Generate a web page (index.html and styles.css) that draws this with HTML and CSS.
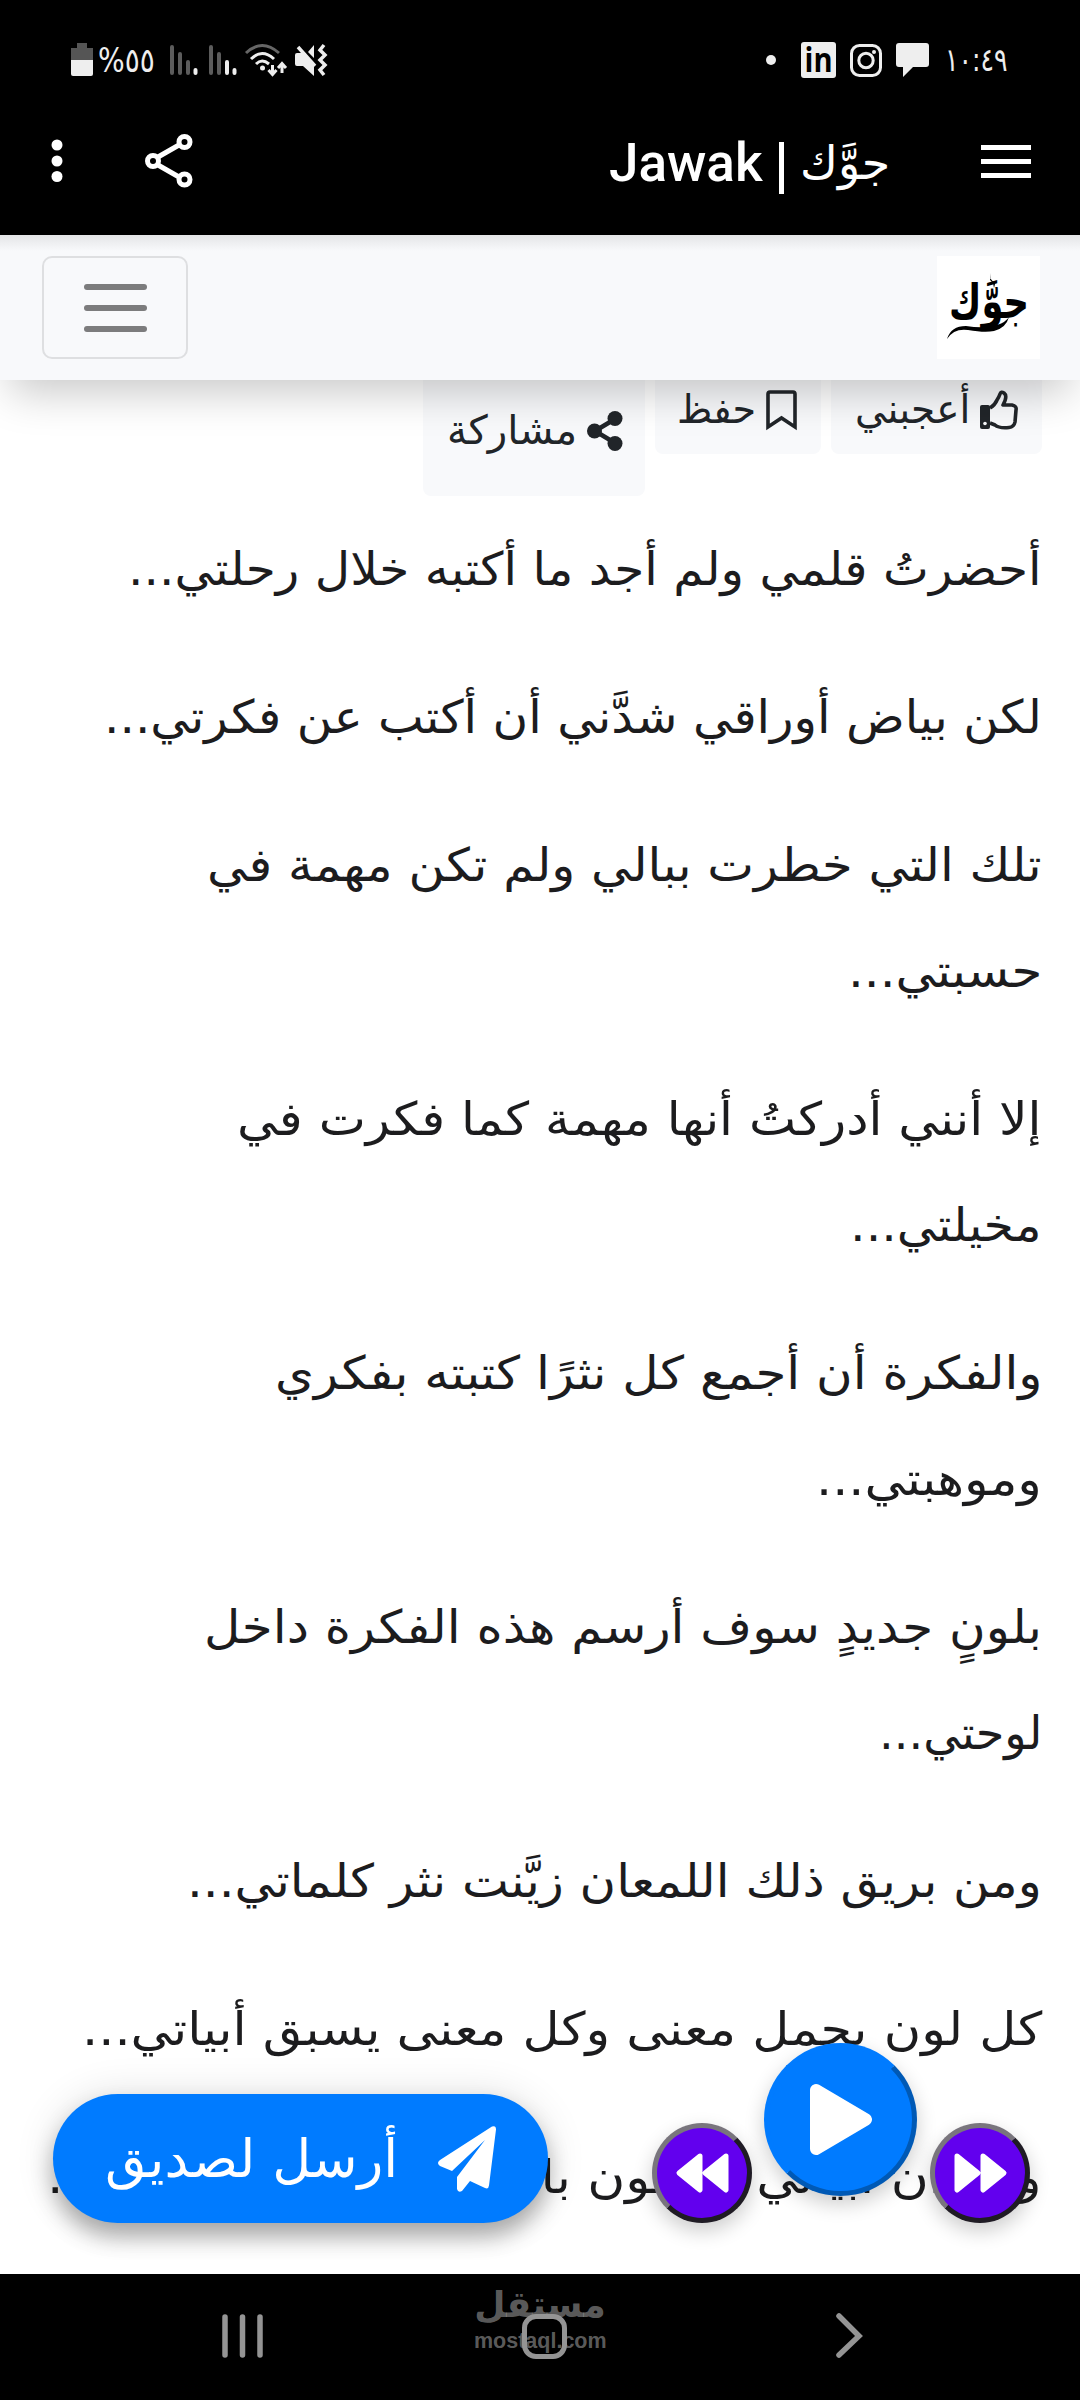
FILE: index.html
```html
<!DOCTYPE html>
<html lang="ar" dir="rtl">
  <head>
    <meta charset="UTF-8">
    <meta name="viewport" content="width=device-width, initial-scale=1.0">
    <title>Jawak | جوَّك</title>
    <link rel="stylesheet" href="styles.css">
  </head>
  <body>
    <header class="top">
      <div class="status">
        <div class="status-left">
          <svg class="battery" width="22" height="34" viewBox="0 0 22 34"><path fill="#555" d="M6 0h10v5h6v12H0V5h6z"/><path fill="#eee" d="M0 17h22v14q0 2-2 2H2q-2 0-2-2z"/></svg>
          <div class="percent"><span class="fit left" data-width="57">%٥٥</span></div>
          <svg class="signal" width="28" height="32" viewBox="0 0 28 32" stroke-width="4" stroke-linecap="round"><g stroke="#5c5c5c"><path d="M2 3v26M10 10v19M18 18v11"/></g><path stroke="#eee" d="M25.500 26v3"/></svg>
          <svg class="signal2" width="28" height="32" viewBox="0 0 28 32" stroke-width="4" stroke-linecap="round"><g stroke="#5c5c5c"><path d="M2 3v26M10 10v19"/></g><path stroke="#eee" d="M18 18v11M25.500 26v3"/></svg>
          <svg class="wifi" width="42" height="34" viewBox="0 0 42 34" fill="none" stroke="#eee" stroke-width="3"><path stroke="#666" d="M1 10Q17-5 34 10"/><path d="M6 16q11-11 23 0M11 21q6-6 13 0"/><circle cx="17.500" cy="25" r="2.500" fill="#eee" stroke="none"/><path d="M27.500 22v9M23.500 27l4 4.500 4-4.500M37 30v-10M33 25l4-4.500 4 4.500"/></svg>
          <svg class="mute" width="32" height="34" viewBox="0 0 32 34"><path fill="#eee" d="M0 12q0-2 2-2h5L19 22v11L8 23H2q-2 0-2-2zM19 2v13l-6-6z"/><path d="M3 4l17 19M29 2l-4 5 5 5-5 5 5 5-5 5 4 5" fill="none" stroke="#eee" stroke-width="3.500"/></svg>
        </div>
        <div class="status-right">
          <i class="dot"></i>
          <svg class="linkedin" width="35" height="36" viewBox="0 0 35 36"><rect width="35" height="36" rx="3" fill="#eee"/><text x="3.500" y="30" textLength="28" lengthAdjust="spacingAndGlyphs">in</text></svg>
          <svg class="insta" width="32" height="33" viewBox="0 0 32 33" fill="none" stroke="#eee" stroke-width="3"><rect x="1.500" y="1.500" width="29" height="30" rx="8"/><circle cx="16" cy="16.500" r="7.200"/><circle cx="24" cy="8" r="2" fill="#eee" stroke="none"/></svg>
          <svg class="chat" width="33" height="34" viewBox="0 0 33 34"><path fill="#eee" d="M3 0h27q3 0 3 3v18q0 3-3 3H17L7 34V24H3q-3 0-3-3V3q0-3 3-3z"/></svg>
          <div class="time"><span class="fit left" data-width="63">١٠:٤٩</span></div>
        </div>
      </div>
      <div class="appbar">
        <svg class="more" width="12" height="44" viewBox="0 0 12 44" fill="#fff"><circle cx="6" cy="6" r="5.500"/><circle cx="6" cy="22" r="5.500"/><circle cx="6" cy="37.500" r="5.500"/></svg>
        <svg class="share-top" width="48" height="54" viewBox="0 0 48 54" fill="none" stroke="#fff" stroke-width="5"><path d="M13 23L34 11M13 31l21 12"/><circle cx="8" cy="27" r="5.500"/><circle cx="39.500" cy="8" r="5.500"/><circle cx="39.500" cy="45.500" r="5.500"/></svg>
        <div class="app-title"><b>Jawak</b><i></i><span>جوَّك</span></div>
        <div class="menu"><i></i><i></i><i></i></div>
      </div>
    </header>

    <nav class="navbar">
      <div class="logo">
        <svg width="103" height="103" viewBox="0 0 103 103"><text class="logo-text" x="12" y="52" textLength="80" lengthAdjust="spacingAndGlyphs" transform="scale(1 1.2)">جوَّك</text><path d="M10 83q4-13 19-13 19 3 31-1 9-3 12-8-3 11-15 14-9 2-26-1-14-2-21 9z"/><path d="M54 17l-1 5 5 6-1 4-1-5-3-3z"/></svg>
      </div>
      <div class="toggler"><i></i><i></i><i></i></div>
    </nav>

    <main>
      <div class="actions">
        <div class="action like">
          <svg width="38" height="40" viewBox="0 0 38 40"><path fill="#212529" d="M0 17q0-2 2-2h6q2 0 2 2v20q0 2-2 2H2q-2 0-2-2z"/><circle cx="5" cy="33.500" r="1.800" fill="#f8f9fb"/><path d="M10 18q5-3 7-8 2-3 3-6 1-3 4-1 4 3-1 12h9q5 1 4 5l-1 12q-1 5-6 5.500-10 1-14-2.500l-5-2" fill="none" stroke="#212529" stroke-width="3.600" stroke-linejoin="round"/></svg>
          <span class="fit" data-width="115">أعجبني</span>
        </div>
        <div class="action save">
          <svg width="31" height="40" viewBox="0 0 31 40"><path d="M2 37V4q0-2 2-2h23q2 0 2 2v33L15.500 28z" fill="none" stroke="#212529" stroke-width="3.600"/></svg>
          <span class="fit" data-width="79">حفظ</span>
        </div>
        <div class="action share">
          <svg width="36" height="40" viewBox="0 0 36 40" fill="#212529"><path d="M8 20L28 8M8 20l20 12" stroke="#212529" stroke-width="4.500"/><circle cx="7.500" cy="20" r="7.500"/><circle cx="28" cy="7.500" r="7.500"/><circle cx="28" cy="32.500" r="7.500"/></svg>
          <span class="fit" data-width="130">مشاركة</span>
        </div>
      </div>

      <div class="poem">
        <p><span class="fit" data-width="914">أحضرتُ قلمي ولم أجد ما أكتبه خلال رحلتي...</span></p>
        <p><span class="fit" data-width="938">لكن بياض أوراقي شدَّني أن أكتب عن فكرتي...</span></p>
        <p><span class="fit" data-width="835">تلك التي خطرت ببالي ولم تكن مهمة في</span><br><span class="fit" data-width="194">حسبتي...</span></p>
        <p><span class="fit" data-width="805">إلا أنني أدركتُ أنها مهمة كما فكرت في</span><br><span class="fit" data-width="192">مخيلتي...</span></p>
        <p><span class="fit" data-width="767">والفكرة أن أجمع كل نثرًا كتبته بفكري</span><br><span class="fit" data-width="226">وموهبتي...</span></p>
        <p><span class="fit" data-width="838">بلونٍ جديدٍ سوف أرسم هذه الفكرة داخل</span><br><span class="fit" data-width="163">لوحتي...</span></p>
        <p><span class="fit" data-width="855">ومن بريق ذلك اللمعان زيَّنت نثر كلماتي...</span></p>
        <p><span class="fit" data-width="960">كل لون يحمل معنى وكل معنى يسبق أبياتي...</span></p>
        <p><span class="fit" data-width="995">وعنوان أبياتي سيكون بارزًا بين جمال كلماتي...</span></p>
      </div>
    </main>

    <div class="send">
      <svg width="58" height="66" viewBox="0 0 58 66" fill="#fff"><path d="M54 .500q4-1.500 4 3l-7 56q-.500 4-4 2.500L32 55l-8 10q-4 2-5-2V51L47 14 14 45 2 40q-4-3 0-6z"/></svg>
      <span class="fit" data-width="293">أرسل لصديق</span>
    </div>
    <button class="round forward"><svg width="53" height="40" viewBox="0 0 53 40"><path d="M3 3l21 17L3 37zM29 3l21 17-21 17z"/></svg></button>
    <button class="round play"><svg width="62" height="71" viewBox="0 0 62 71"><path d="M6 6v59l50-29.500z"/></svg></button>
    <button class="round rewind"><svg width="53" height="40" viewBox="0 0 53 40"><path d="M50 3L29 20l21 17zM24 3L3 20l21 17z"/></svg></button>

    <footer class="bottom">
      <svg class="recents" width="42" height="44" viewBox="0 0 42 44"><path d="M3 3v38M20.500 3v38M38 3v38"/></svg>
      <i class="home"></i>
      <svg class="next" width="28" height="46" viewBox="0 0 28 46"><path d="M3 3l20 20L3 42"/></svg>
      <div class="mark"><span class="mark-ar">مستقل</span><span class="mark-en">mostaql.com</span></div>
    </footer>
    <script src="script.js"></script>
  </body>
</html>
```
FILE: script.js
```js
// stretch each line to its own measure
document.querySelectorAll(".fit").forEach(function (el) {
  let ratio = el.dataset.width / el.offsetWidth;
  el.style.transform = "scaleX(" + ratio + ")";
});
```
FILE: styles.css
```css
* {
  box-sizing: border-box;
}
body {
  margin: 0;
  width: 1080px;
  height: 2400px;
  overflow: hidden;
  position: relative;
  background: #fff;
  color: #212529;
  font-family: "DejaVu Sans", "Noto Sans", sans-serif;
}
svg {
  display: block;
  flex: none;
  overflow: visible;
}
.fit {
  display: inline-block;
  white-space: nowrap;
  transform-origin: right;
}
.fit.left {
  transform-origin: left;
}
.top {
  height: 235px;
  background: #000;
  color: #fff;
}
.status {
  direction: ltr;
  height: 120px;
  padding: 0 73px 0 71px;
  display: flex;
  align-items: center;
  justify-content: space-between;
}
.status-left,
.status-right {
  display: flex;
  align-items: center;
}
.percent {
  width: 72px;
  margin-left: 5px;
  font-size: 33px;
  color: #eee;
}
.signal2 {
  margin-left: 11px;
}
.wifi {
  margin-left: 8px;
}
.mute {
  margin-left: 8px;
}
.dot {
  width: 10px;
  height: 10px;
  border-radius: 50%;
  background: #eee;
  margin-right: 25px;
}
.linkedin text {
  direction: ltr;
  font: bold 34px "Open Sans", sans-serif;
}
.insta {
  margin-left: 14px;
}
.chat {
  margin-left: 14px;
}
.time {
  width: 60px;
  margin-left: 16px;
  margin-right: 2px;
  font-size: 32px;
  color: #eee;
}
.appbar {
  direction: ltr;
  height: 82px;
  padding: 0 49px 0 51px;
  display: flex;
  align-items: center;
}
.share-top {
  margin-left: 82px;
}
.app-title {
  width: 280px;
  margin-left: 416px;
  display: flex;
  align-items: center;
}
.app-title b {
  flex: none;
  width: 153px;
  margin-top: 3px;
  font: 500 53px "Roboto", sans-serif;
}
.app-title i {
  flex: none;
  width: 5px;
  height: 52px;
  margin: 14px 16px 0 17px;
  background: #fff;
}
.app-title span {
  margin-top: 3px;
  font-size: 46px;
}
.menu {
  width: 50px;
  margin-left: auto;
  display: grid;
  gap: 9px;
}
.menu i {
  height: 5px;
  background: #fff;
}
.navbar {
  position: relative;
  z-index: 2;
  height: 145px;
  padding: 0 40px 0 42px;
  display: flex;
  align-items: center;
  justify-content: space-between;
  background: linear-gradient(#e4e5e7, #f8f9fb 16px);
  box-shadow: 0 22px 44px -10px rgba(0, 0, 0, 0.22);
}
.logo {
  width: 103px;
  height: 103px;
  background: #fff;
}
.logo-text {
  font: bold 40px "DejaVu Sans", sans-serif;
  direction: rtl;
  text-anchor: end;
}
.toggler {
  width: 146px;
  height: 103px;
  border: 2px solid #dedfe1;
  border-radius: 10px;
  display: flex;
  flex-direction: column;
  align-items: center;
  justify-content: center;
  gap: 15px;
}
.toggler i {
  width: 63px;
  height: 6px;
  border-radius: 3px;
  background: #7c7c7d;
}
main {
  height: 1894px;
  overflow: hidden;
  padding: 0 38px;
}
.actions {
  height: 116px;
  display: flex;
  align-items: flex-start;
  gap: 10px;
}
.action {
  height: 74px;
  padding: 0 24px 14px;
  display: flex;
  align-items: center;
  gap: 10px;
  background: #f8f9fb;
  border-radius: 0 0 8px 8px;
  font-size: 40px;
}
.action span {
  margin-top: -2px;
}
.like {
  width: 211px;
}
.save {
  width: 166px;
}
.share {
  width: 222px;
  height: 116px;
  padding-right: 22px;
}
.poem {
  padding: 20px 0 0;
  font-size: 46px;
  line-height: 106px;
  color: #1c1c1e;
  white-space: nowrap;
}
.poem p {
  margin: 0 0 42px;
}
.send {
  position: absolute;
  z-index: 3;
  left: 53px;
  top: 2094px;
  width: 495px;
  height: 129px;
  padding: 0 52px;
  border-radius: 65px;
  display: flex;
  align-items: center;
  gap: 40px;
  background: #007bff;
  color: #fff;
  font-size: 52px;
  box-shadow: 0 14px 22px rgba(0, 0, 0, 0.3), 0 0 40px rgba(0, 0, 0, 0.12);
}
.round {
  position: absolute;
  z-index: 3;
  width: 100px;
  height: 100px;
  padding: 0;
  border-radius: 50%;
  border: 5px solid #1f1b24;
  border-top-color: #79757d;
  border-left-color: #79757d;
  background: #6200ee;
  display: flex;
  align-items: center;
  justify-content: center;
  box-shadow: 0 8px 20px rgba(0, 0, 0, 0.2);
}
.round path {
  fill: #fff;
  stroke: #fff;
  stroke-width: 5;
  stroke-linejoin: round;
}
.forward {
  left: 930px;
  top: 2123px;
}
.rewind {
  left: 652px;
  top: 2123px;
}
.play {
  left: 764px;
  top: 2043px;
  width: 153px;
  height: 153px;
  background: #007bff;
  border-color: #007bff #0059b5 #0059b5 #007bff;
}
.play path {
  stroke-width: 12;
}
.bottom {
  position: relative;
  z-index: 4;
  direction: ltr;
  height: 126px;
  padding: 0 216px 2px 222px;
  display: flex;
  align-items: center;
  background: #000;
}
.bottom svg {
  fill: none;
  stroke: #949494;
  stroke-width: 5.5;
  stroke-linecap: round;
}
.home {
  width: 45px;
  height: 45px;
  margin-left: 258px;
  border: 5px solid #949494;
  border-radius: 14px;
}
.next {
  margin-left: auto;
}
.mark {
  position: absolute;
  left: 474px;
  top: 8px;
  width: 132px;
  color: rgba(150, 150, 150, 0.62);
  font-weight: bold;
  text-align: center;
  white-space: nowrap;
}
.mark span {
  display: block;
}
.mark-ar {
  font-size: 36px;
  line-height: 46px;
}
.mark-en {
  margin-top: 2px;
  font: bold 21.5px/22px "Liberation Sans", sans-serif;
}
```
